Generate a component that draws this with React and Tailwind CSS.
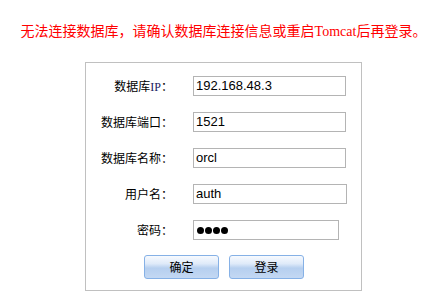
import React from "react";

const cjk = { fontFamily: '"Noto Sans CJK SC", "Noto Sans", sans-serif' };
const arial = { fontFamily: '"Liberation Sans", Arial, sans-serif' };
const serif = { fontFamily: '"Liberation Serif", "Times New Roman", serif' };

function Row({ label, value, width = "w-[153px]", password = false }) {
  return (
    <div className="flex h-[20px] items-center">
      <div className="w-[87px] text-right text-[12px] leading-[20px] text-black" style={cjk}>
        {label}
      </div>
      <div
        className={`ml-[20px] h-[20px] ${width} border border-[#b4b4b4] bg-white pl-[2px] flex items-center text-[13px] leading-[18px] text-black`}
        style={arial}
      >
        {password ? (
          <span className="flex gap-[1px] pl-[1px]">
            {[0, 1, 2, 3].map((i) => (
              <span key={i} className="inline-block h-[7px] w-[7px] rounded-full bg-black" />
            ))}
          </span>
        ) : (
          value
        )}
      </div>
    </div>
  );
}

function Btn({ children }) {
  return (
    <button
      className="h-[24px] w-[75px] rounded-[3px] border border-[#86b1e6] bg-[linear-gradient(to_bottom,#f7fafe_0%,#dfeaf9_35%,#b6cfef_55%,#c3d8f3_100%)] text-[12px] leading-[20px] text-black"
      style={cjk}
    >
      {children}
    </button>
  );
}

export default function App() {
  return (
    <div className="min-h-[305px] w-[447px] bg-white">
      <div className="pt-[21px] text-center text-[14px] leading-[18px] text-[#ff0000]" style={cjk}>
        无法连接数据库，请确认数据库连接信息或重启<span style={serif}>Tomcat</span>后再登录。
      </div>
      <div className="ml-[85px] mt-[21px] h-[229px] w-[277px] border border-[#c0c0c0] pt-[13px]">
        <div className="flex flex-col gap-[16px]">
          <Row
            label={
              <>
                数据库<span style={serif} className="text-[#1a1a60]">IP</span>：
              </>
            }
            value="192.168.48.3"
          />
          <Row label="数据库端口：" value="1521" />
          <Row label="数据库名称：" value="orcl" />
          <Row label="用户名：" value="auth" width="w-[154px]" />
          <Row label="密码：" password width="w-[146px]" />
        </div>
        <div className="mt-[15px] flex justify-center gap-[10px] pl-[1px]">
          <Btn>确定</Btn>
          <Btn>登录</Btn>
        </div>
      </div>
    </div>
  );
}
